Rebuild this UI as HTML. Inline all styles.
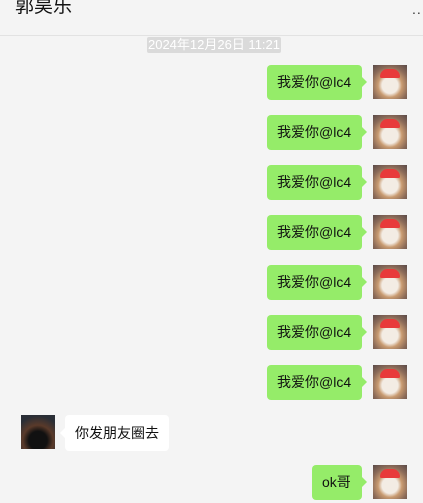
<!DOCTYPE html>
<html><head><meta charset="utf-8"><style>
body{margin:0;width:423px;height:503px;background:#f4f4f4;font-family:"Liberation Sans","Noto Sans CJK SC",sans-serif;position:relative;overflow:hidden}
.t{position:absolute;left:15px;top:-9px;font-size:19px;color:#111}
.dots{position:absolute;left:412px;top:1px;font-size:14px;color:#333;letter-spacing:1px}
.hl{position:absolute;left:0;top:35px;width:423px;height:1px;background:#e2e2e2}
.ts{position:absolute;left:147px;top:37px;width:134px;height:16px;background:#dadada;color:#fff;font-size:13px;line-height:16px;text-align:center;border-radius:2px;white-space:nowrap}
.b{position:absolute;height:35px;line-height:35px;font-size:14px;color:#111;border-radius:4px;padding:0 10px;box-sizing:border-box}
.g{background:#95ec69}
.g:after{content:"";position:absolute;right:-5px;top:12px;border-left:5px solid #95ec69;border-top:5px solid transparent;border-bottom:5px solid transparent}
.w{background:#fff}
.w:before{content:"";position:absolute;left:-5px;top:13px;border-right:5px solid #fff;border-top:5px solid transparent;border-bottom:5px solid transparent}
.av{position:absolute;width:34px;height:34px;left:373px;background:radial-gradient(circle at 50% 60%,#f3ece4 0 30%,#c89a70 45%,#8a6a58 70%,#5a4a48);overflow:hidden}
.av:before{content:"";position:absolute;left:7px;top:4px;width:20px;height:9px;background:#e83a3a;border-radius:10px 10px 2px 2px}
</style></head><body>
<div class="t">郭昊乐</div><div class="dots">..</div>
<div class="hl"></div>
<div class="ts">2024年12月26日 11:21</div>
<div class="b g" style="left:267px;top:65px;width:95px">我爱你@lc4</div><div class="av" style="top:65px"></div>
<div class="b g" style="left:267px;top:115px;width:95px">我爱你@lc4</div><div class="av" style="top:115px"></div>
<div class="b g" style="left:267px;top:165px;width:95px">我爱你@lc4</div><div class="av" style="top:165px"></div>
<div class="b g" style="left:267px;top:215px;width:95px">我爱你@lc4</div><div class="av" style="top:215px"></div>
<div class="b g" style="left:267px;top:265px;width:95px">我爱你@lc4</div><div class="av" style="top:265px"></div>
<div class="b g" style="left:267px;top:315px;width:95px">我爱你@lc4</div><div class="av" style="top:315px"></div>
<div class="b g" style="left:267px;top:365px;width:95px">我爱你@lc4</div><div class="av" style="top:365px"></div>
<div style="position:absolute;left:21px;top:415px;width:34px;height:34px;background:radial-gradient(circle at 50% 75%,#111 0 30%,#5a3a2a 50%,#2a2e36 80%)"></div>
<div class="b w" style="left:65px;top:415px;width:104px;height:36px;line-height:36px">你发朋友圈去</div>
<div class="b g" style="left:312px;top:465px;width:50px">ok哥</div><div class="av" style="top:465px"></div>
</body></html>
